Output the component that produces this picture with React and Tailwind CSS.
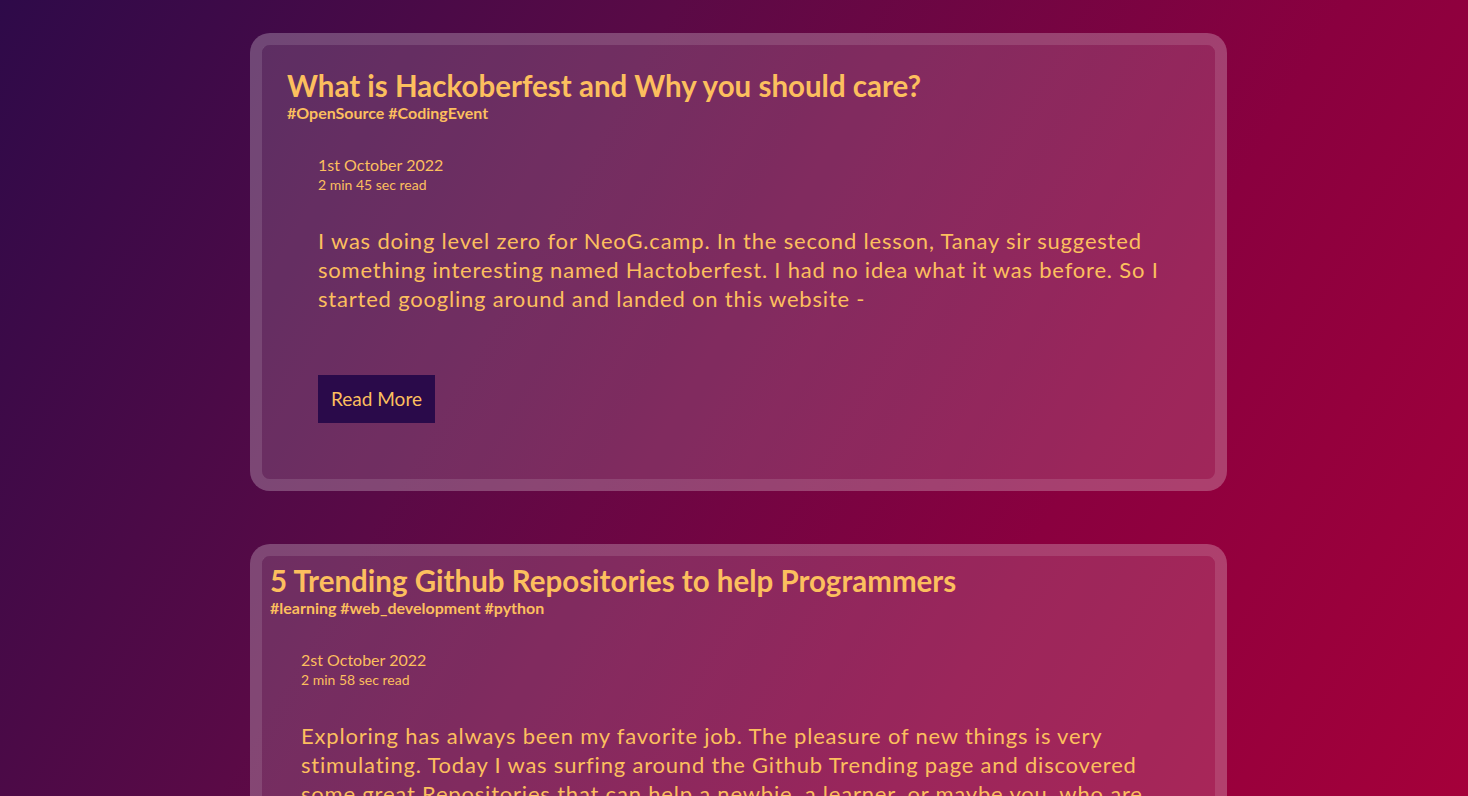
export default function App() {
  const posts = [
    {
      title: "What is Hackoberfest and Why you should care?",
      tags: "#OpenSource #CodingEvent",
      date: "1st October 2022",
      read: "2 min 45 sec read",
      body: "I was doing level zero for NeoG.camp. In the second lesson, Tanay sir suggested something interesting named Hactoberfest. I had no idea what it was before. So I started googling around and landed on this website -",
      pad: "px-[25px] pt-[23px] pb-[56px]",
    },
    {
      title: "5 Trending Github Repositories to help Programmers",
      tags: "#learning #web_development #python",
      date: "2st October 2022",
      read: "2 min 58 sec read",
      body: "Exploring has always been my favorite job. The pleasure of new things is very stimulating. Today I was surfing around the Github Trending page and discovered some great Repositories that can help a newbie, a learner, or maybe you, who are looking for tools to make your work easier and faster. Let's have a look.",
      pad: "px-[8px] pt-[7px] pb-[56px]",
    },
  ];
  return (
    <div
      className="min-h-screen w-full bg-fixed bg-[linear-gradient(120deg,#2e0a49_0%,#5a0a46_35%,#8a003f_70%,#a5003a_100%)] pt-[33px] pb-[40px] pl-[250px] text-[#fcbf5e]"
      style={{ fontFamily: "Lato, 'Noto Sans', sans-serif" }}
    >
      <div className="flex w-[977px] flex-col gap-[53px]">
        {posts.map((p, i) => (
          <div
            key={i}
            className="rounded-[20px] border-[12px] border-white/25 bg-white/15 bg-clip-padding"
          >
            <div className={`rounded-[8px] ${p.pad}`}>
              <h2 className="text-[29.5px] font-bold leading-[36px]">{p.title}</h2>
              <div className="text-[16px] font-bold leading-[18px]">{p.tags}</div>
              <div className="px-[31px]">
                <div className="mt-[32px] text-[16px] leading-[22px]">{p.date}</div>
                <div className="text-[14px] leading-[17px]">{p.read}</div>
                <p className="mt-[33px] text-[22px] leading-[29px] tracking-[0.8px]">{p.body}</p>
                <button className="mt-[62px] h-[48px] bg-[#2a0a4a] px-[13px] text-[19px] text-[#fcbf5e]">
                  Read More
                </button>
              </div>
            </div>
          </div>
        ))}
      </div>
    </div>
  );
}
